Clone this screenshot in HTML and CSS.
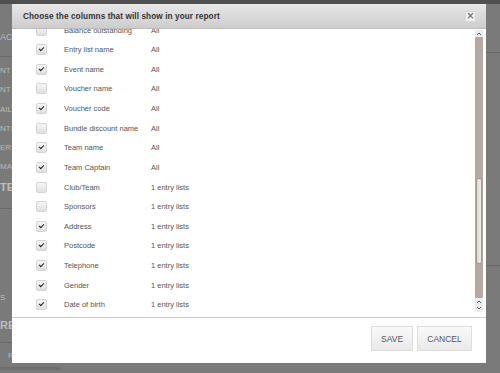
FILE: index.html
```html
<!DOCTYPE html>
<html lang="en">

<head>
    <meta charset="utf-8">
    <meta name="viewport" content="width=device-width, initial-scale=1.0">
    <title>Report columns</title>
    <link rel="stylesheet" href="styles.css">
</head>

<body>
    <div class="topbar"></div>
    <div class="page">
        <aside class="sidebar">
            <div class="side-head">ACCOUNT</div>
            <div class="side-list">
                <div class="side-item">NT</div>
                <div class="side-item">NT</div>
                <div class="side-item">AILS</div>
                <div class="side-item">NTS</div>
                <div class="side-item">ERS</div>
                <div class="side-item">MAILS</div>
                <div class="side-title">TEMPLATES</div>
            </div>
            <div class="side-gap">
                <div class="side-item">S</div>
            </div>
            <div class="side-title side-rep">REPORTS</div>
            <div class="side-item side-last">RE</div>
        </aside>
        <div class="content">
            <div class="content-top"></div>
            <div class="content-mid"></div>
        </div>
    </div>

    <div class="modal">
        <div class="modal-head">
            <h1>Choose the columns that will show in your report</h1>
            <button class="close">&times;</button>
        </div>
        <div class="modal-body">
            <div class="rows">
                <div class="row"><span class="box"></span><span class="label">Balance outstanding</span><span class="value">All</span></div>
                <div class="row"><span class="box on"></span><span class="label">Entry list name</span><span class="value">All</span></div>
                <div class="row"><span class="box on"></span><span class="label">Event name</span><span class="value">All</span></div>
                <div class="row"><span class="box"></span><span class="label">Voucher name</span><span class="value">All</span></div>
                <div class="row"><span class="box on"></span><span class="label">Voucher code</span><span class="value">All</span></div>
                <div class="row"><span class="box"></span><span class="label">Bundle discount name</span><span class="value">All</span></div>
                <div class="row"><span class="box on"></span><span class="label">Team name</span><span class="value">All</span></div>
                <div class="row"><span class="box on"></span><span class="label">Team Captain</span><span class="value">All</span></div>
                <div class="row"><span class="box"></span><span class="label">Club/Team</span><span class="value">1 entry lists</span></div>
                <div class="row"><span class="box"></span><span class="label">Sponsors</span><span class="value">1 entry lists</span></div>
                <div class="row"><span class="box on"></span><span class="label">Address</span><span class="value">1 entry lists</span></div>
                <div class="row"><span class="box on"></span><span class="label">Postcode</span><span class="value">1 entry lists</span></div>
                <div class="row"><span class="box on"></span><span class="label">Telephone</span><span class="value">1 entry lists</span></div>
                <div class="row"><span class="box on"></span><span class="label">Gender</span><span class="value">1 entry lists</span></div>
                <div class="row"><span class="box on"></span><span class="label">Date of birth</span><span class="value">1 entry lists</span></div>
            </div>
            <div class="scrollbar">
                <svg class="arrow" width="8" height="7" viewBox="0 0 8 7"><path d="M2 5 L4 3 L6 5" fill="none" stroke="#555" stroke-width="1"/></svg>
                <div class="track">
                    <div class="thumb"></div>
                </div>
                <svg class="arrow" width="8" height="14" viewBox="0 0 8 14"><path d="M2 5 L4 3 L6 5 M2 9 L4 11 L6 9" fill="none" stroke="#555" stroke-width="1"/></svg>
            </div>
        </div>
        <div class="modal-foot">
            <button class="btn">SAVE</button>
            <button class="btn">CANCEL</button>
        </div>
    </div>
</body>

</html>
```

FILE: styles.css
```css
body {
    margin: 0;
    width: 500px;
    height: 373px;
    overflow: hidden;
    background-color: #7a7a7a;
    font-family: "Liberation Sans", Arial, sans-serif;
}

.topbar {
    height: 4px;
    background-color: #4f4f4f;
}

.page {
    display: flex;
    height: 369px;
}

.sidebar {
    width: 60px;
    color: #b9b9b9;
    font-size: 8px;
    overflow: hidden;
    white-space: nowrap;
}

.side-head {
    height: 53px;
    box-sizing: border-box;
    padding-top: 28px;
    border-bottom: 1px solid #6a6a6a;
    font-size: 9px;
}

.side-list {
    padding-top: 4px;
    height: 147px;
    border-bottom: 1px solid #6a6a6a;
}

.side-item {
    height: 19.3px;
    line-height: 19.3px;
}

.side-title {
    font-size: 11px;
    font-weight: bold;
    height: 20px;
    line-height: 20px;
    color: #bdbdbd;
}

.side-gap {
    height: 97px;
    display: flex;
    flex-direction: column;
    justify-content: flex-end;
    border-top: 1px solid #7f7f7f;
}

.side-rep {
    height: 35px;
    line-height: 36px;
    border-bottom: 1px solid #6a6a6a;
}

.side-last {
    height: 24px;
    line-height: 26px;
    padding-left: 8px;
    border-bottom: 3px solid #6e6e6e;
}

.content {
    flex: 1;
}

.content-top {
    height: 48px;
    border-bottom: 1px solid #686868;
}

.content-mid {
    height: 212px;
    border-bottom: 1px solid #686868;
}

.modal {
    position: absolute;
    left: 12px;
    top: 4px;
    width: 474px;
    height: 359px;
    background-color: white;
    display: flex;
    flex-direction: column;
}

.modal-head {
    height: 25px;
    box-sizing: border-box;
    display: flex;
    align-items: center;
    justify-content: space-between;
    padding: 0 10px 0 11px;
    background: linear-gradient(#e7e7e7, #cdcdcd);
    border-bottom: 1px solid #bcbcbc;
}

h1 {
    margin: 0;
    font-size: 8.2px;
    font-weight: bold;
    color: #333;
    letter-spacing: 0.1px;
}

.close {
    width: 11px;
    height: 11px;
    padding: 0;
    border: 1px solid #d8d8d8;
    background-color: #f2f2f2;
    color: #777;
    font-size: 10px;
    font-weight: bold;
    line-height: 8px;
    font-family: "DejaVu Sans", sans-serif;
}

.modal-body {
    flex: 1;
    display: flex;
    overflow: hidden;
    padding-right: 3px;
    border-bottom: 1px solid #cfcfcf;
}

.rows {
    flex: 1;
    margin-top: -8.8px;
}

.row {
    height: 19.64px;
    display: flex;
    align-items: center;
    font-size: 7.5px;
    color: #555;
}

.box {
    width: 9px;
    height: 9px;
    margin-left: 24px;
    border: 1px solid #d4d4d4;
    border-radius: 2px;
    background: linear-gradient(#f6f6f6, #e0e0e0);
    position: relative;
}

.box.on::after {
    content: "";
    position: absolute;
    left: 2px;
    top: 2px;
    width: 4px;
    height: 2px;
    border-left: 1.3px solid #222;
    border-bottom: 1.3px solid #222;
    transform: rotate(-45deg);
}

.label {
    margin-left: 17px;
    width: 87px;
}

.value {
    color: #555;
}

.scrollbar {
    width: 8px;
    margin-top: 1px;
    margin-bottom: 5px;
    display: flex;
    flex-direction: column;
    background-color: #ececec;
}

.arrow {
    display: block;
    flex: none;
}

.track {
    flex: 1;
    background-color: #b2aaa6;
    padding-top: 141px;
    border-radius: 1px;
}

.thumb {
    height: 86px;
    margin: 0 1px;
    box-sizing: border-box;
    border: 1px solid #a09894;
    border-radius: 2px;
    background: linear-gradient(90deg, #ddd8d5, #efecea);
}

.modal-foot {
    height: 45px;
    display: flex;
    justify-content: flex-end;
    align-items: flex-start;
    gap: 4px;
    padding: 8px 14px 0 0;
    box-sizing: border-box;
}

.btn {
    height: 25px;
    padding: 0 9px;
    border: 1px solid #dedede;
    background: linear-gradient(#f9f9f9, #e9e9e9);
    color: #555;
    font-family: "Liberation Sans", Arial, sans-serif;
    font-size: 8.5px;
}

.btn:first-child {
    width: 42px;
}

.btn:last-child {
    width: 55px;
}
```
